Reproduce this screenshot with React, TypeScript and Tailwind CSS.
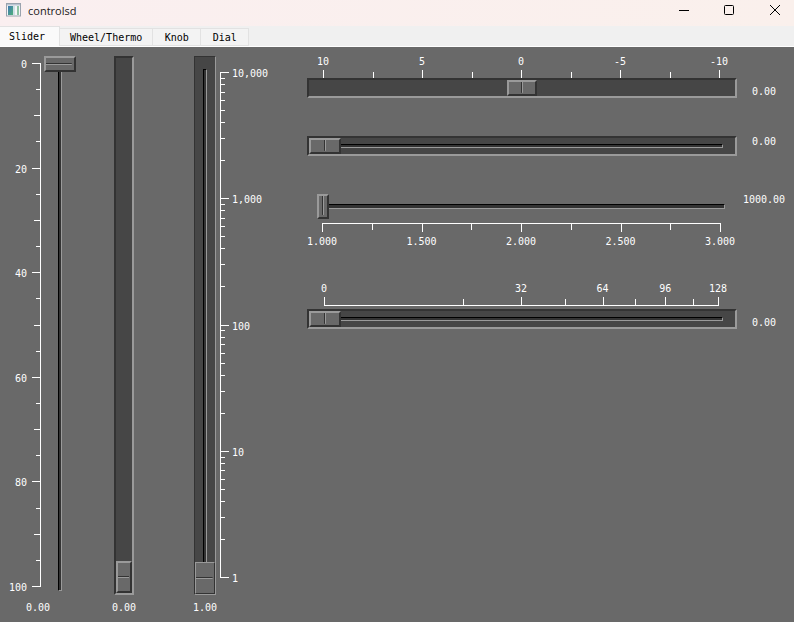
import { useState } from "react";

type Tick = { at: number; size: number; label?: string };

const white = "fill-white";

/* Bevelled thumb shared by every slider; the notch in the middle is a two-tone background. */
const inputBase =
  "m-0 block cursor-pointer appearance-none bg-transparent [grid-area:1/1] " +
  "[&::-webkit-slider-runnable-track]:h-full [&::-webkit-slider-runnable-track]:w-full [&::-webkit-slider-runnable-track]:appearance-none " +
  "[&::-webkit-slider-thumb]:appearance-none [&::-webkit-slider-thumb]:rounded-none [&::-webkit-slider-thumb]:border-solid " +
  "[&::-webkit-slider-thumb]:border-t-[#9a9a9a] [&::-webkit-slider-thumb]:border-l-[#9a9a9a] [&::-webkit-slider-thumb]:border-r-[#333333] [&::-webkit-slider-thumb]:border-b-[#333333] " +
  "[&::-webkit-slider-thumb]:bg-[#696969] [&::-webkit-slider-thumb]:bg-no-repeat";

const vertical =
  "h-full w-full [writing-mode:vertical-lr] " +
  "[&::-webkit-slider-thumb]:w-full [&::-webkit-slider-thumb]:bg-[linear-gradient(#333333_50%,#9a9a9a_50%)] " +
  "[&::-webkit-slider-thumb]:bg-[length:92%_2px] [&::-webkit-slider-thumb]:bg-[position:0_50%]";

const horizontal =
  "h-full w-full " +
  "[&::-webkit-slider-thumb]:h-full [&::-webkit-slider-thumb]:bg-[linear-gradient(90deg,#333333_50%,#9a9a9a_50%)] " +
  "[&::-webkit-slider-thumb]:bg-[length:2px_90%] [&::-webkit-slider-thumb]:bg-[position:50%_0]";

const trough = "border-t-[#333333] border-l-[#333333] border-r-[#9a9a9a] border-b-[#9a9a9a] bg-[#464646]";
const groove = "border-t border-r border-b border-t-black border-r-[#9a9a9a] border-b-[#9a9a9a] bg-[#333333] [grid-area:1/1]";
const grooveVertical = "border-l border-r border-b border-l-black border-r-[#9a9a9a] border-b-[#9a9a9a] bg-[#333333] [grid-area:1/1]";

function Range(props: {
  label: string;
  min: number;
  max: number;
  value: number;
  onChange: (v: number) => void;
  className: string;
}) {
  const { label, min, max, value, onChange, className } = props;
  return (
    <input
      type="range"
      aria-label={label}
      min={min}
      max={max}
      step="any"
      value={value}
      onChange={(e) => onChange(Number(e.target.value))}
      className={`${inputBase} ${className}`}
    />
  );
}

function VScale({ ticks, side, className }: { ticks: Tick[]; side: "left" | "right"; className: string }) {
  const left = side === "left";
  return (
    <svg className={`block overflow-visible ${className}`} shapeRendering="crispEdges" aria-hidden="true">
      <rect x={left ? 40 : 0} y="0" width="1" height="100%" className={white} />
      {ticks.map((t) => (
        <g key={t.at}>
          <rect x={left ? 41 - t.size : 0} y={`${t.at * 100}%`} width={t.size} height="1" className={white} />
          {t.label && (
            <text x={left ? 27 : 12} y={`${t.at * 100}%`} dy="5" textAnchor={left ? "end" : "start"} className={white}>
              {t.label}
            </text>
          )}
        </g>
      ))}
    </svg>
  );
}

function HScale(props: { ticks: Tick[]; side: "top" | "bottom"; base: number; line: boolean; className: string }) {
  const { ticks, side, base, line, className } = props;
  const top = side === "top";
  return (
    <svg className={`block overflow-visible ${className}`} shapeRendering="crispEdges" aria-hidden="true">
      {line && <rect x="0" y={base} width="100%" height="1" className={white} />}
      {ticks.map((t) => (
        <g key={t.at}>
          <rect x={`${t.at * 100}%`} y={top ? base + 1 - t.size : base} width="1" height={t.size} className={white} />
          {t.label && (
            <text x={`${t.at * 100}%`} y={top ? 11 : 22} textAnchor="middle" className={white}>
              {t.label}
            </text>
          )}
        </g>
      ))}
    </svg>
  );
}

const percentTicks: Tick[] = Array.from({ length: 21 }, (_, i) => ({
  at: i / 20,
  size: i % 4 === 0 ? 9 : i % 2 === 0 ? 7 : 5,
  label: i % 4 === 0 ? String(i * 5) : undefined,
}));

const decadeLabels = ["1", "10", "100", "1,000", "10,000"];
const logTicks: Tick[] = decadeLabels.flatMap((label, d) => {
  const major: Tick = { at: 1 - d / 4, size: 9, label };
  if (d === 4) return [major];
  const minors = [2, 3, 4, 5, 6, 7, 8, 9].map((m) => ({ at: 1 - (d + Math.log10(m)) / 4, size: 5 }));
  return [major, ...minors];
});

const evenTicks = (labels: string[], major: number, minor: number): Tick[] =>
  Array.from({ length: 9 }, (_, i) => ({
    at: i / 8,
    size: i % 2 === 0 ? major : minor,
    label: i % 2 === 0 ? labels[i / 2] : undefined,
  }));

const centredTicks = evenTicks(["10", "5", "0", "-5", "-10"], 8, 6);
const thousandTicks = evenTicks(["1.000", "1.500", "2.000", "2.500", "3.000"], 9, 7);
const rootTicks: Tick[] = [0, 16, 32, 48, 64, 80, 96, 112, 128].map((v) => ({
  at: Math.sqrt(v / 128),
  size: v % 32 === 0 ? 9 : 7,
  label: v % 32 === 0 ? String(v) : undefined,
}));

function Value({ children, className = "" }: { children: string; className?: string }) {
  return <output className={`block text-center leading-3 ${className}`}>{children}</output>;
}

function SliderPage() {
  const [v, setV] = useState([0, 0, 0, 0, 0, 1000, 0]);
  const set = (i: number) => (n: number) => setV((old) => old.map((x, k) => (k === i ? n : x)));

  return (
    <main className="flex min-h-0 flex-1 bg-[#696969] font-['DejaVu_Sans_Mono',monospace] text-[10px] text-white">
      <section className="flex shrink-0 pt-[9px] pb-2">
        <div className="flex w-[76px] flex-col gap-[7px]">
          <div className="flex min-h-0 flex-1 gap-[3px]">
            <div className="w-[41px] pt-[7px] pb-[9px]">
              <VScale ticks={percentTicks} side="left" className="h-full w-full" />
            </div>
            <div className="grid w-8">
              <div className={`${grooveVertical} mx-[14px] mb-1`} />
              <Range label="Percent" min={0} max={100} value={v[0]} onChange={set(0)} className={`${vertical} [&::-webkit-slider-thumb]:h-4 [&::-webkit-slider-thumb]:border-2`} />
            </div>
          </div>
          <Value>{v[0].toFixed(2)}</Value>
        </div>

        <div className="ml-9 flex w-6 flex-col gap-[7px]">
          <div className={`mx-[2px] grid min-h-0 flex-1 border-2 ${trough}`}>
            <Range label="Trough" min={0} max={100} value={v[1]} onChange={set(1)} className={`${vertical} [direction:rtl] [&::-webkit-slider-thumb]:h-8 [&::-webkit-slider-thumb]:border-2`} />
          </div>
          <Value>{v[1].toFixed(2)}</Value>
        </div>

        <div className="ml-[57px] flex gap-[3px]">
          <div className="flex w-6 flex-col gap-[7px]">
            <div className={`mx-px grid min-h-0 flex-1 border ${trough}`}>
              <div className={`${grooveVertical} mx-2 my-3 border-t border-t-black`} />
              <Range label="Logarithmic" min={0} max={4} value={v[2]} onChange={set(2)} className={`${vertical} [direction:rtl] [&::-webkit-slider-thumb]:h-8 [&::-webkit-slider-thumb]:border`} />
            </div>
            <Value>{Math.pow(10, v[2]).toFixed(2)}</Value>
          </div>
          <div className="w-[50px] pt-4 pb-[37px]">
            <VScale ticks={logTicks} side="right" className="h-full w-full" />
          </div>
        </div>
      </section>

      <section className="ml-[37px] min-w-0 flex-1 pt-[7px] pr-[3px]">
        <div className="flex items-end">
          <div className="min-w-0 flex-1">
            <div className="pr-[18px] pl-4">
              <HScale ticks={centredTicks} side="top" base={23} line={false} className="h-6 w-full" />
            </div>
            <div className={`grid h-5 border-2 ${trough}`}>
              <Range label="Centred" min={-10} max={10} value={v[3]} onChange={set(3)} className={`${horizontal} [&::-webkit-slider-thumb]:w-[30px] [&::-webkit-slider-thumb]:border-2`} />
            </div>
          </div>
          <Value className="w-[54px]">{v[3].toFixed(2)}</Value>
        </div>

        <div className="mt-[38px] flex items-start">
          <div className={`grid h-5 min-w-0 flex-1 border-2 ${trough}`}>
            <div className={`${groove} mx-3 my-[6px]`} />
            <Range label="Grooved" min={0} max={100} value={v[4]} onChange={set(4)} className={`${horizontal} [&::-webkit-slider-thumb]:w-8 [&::-webkit-slider-thumb]:border-2`} />
          </div>
          <Value className="w-[54px]">{v[4].toFixed(2)}</Value>
        </div>

        <div className="mt-[38px] flex items-start">
          <div className="min-w-0 flex-1">
            <div className="mx-[10px] grid h-[25px]">
              <div className={`${groove} my-[10px] mr-[2px]`} />
              <Range label="Thousands" min={1000} max={3000} value={v[5]} onChange={set(5)} className={`${horizontal} [&::-webkit-slider-thumb]:w-3 [&::-webkit-slider-thumb]:border-2`} />
            </div>
            <div className="mt-1 pr-[17px] pl-[15px]">
              <HScale ticks={thousandTicks} side="bottom" base={0} line className="h-[25px] w-full" />
            </div>
          </div>
          <Value className="w-[54px]">{v[5].toFixed(2)}</Value>
        </div>

        <div className="mt-[33px] flex items-end">
          <div className="min-w-0 flex-1">
            <div className="mb-[3px] pr-[19px] pl-[17px]">
              <HScale ticks={rootTicks} side="top" base={24} line className="h-[25px] w-full" />
            </div>
            <div className={`grid h-5 border-2 ${trough}`}>
              <div className={`${groove} mx-3 my-[6px]`} />
              <Range label="Square root" min={0} max={100} value={v[6]} onChange={set(6)} className={`${horizontal} [&::-webkit-slider-thumb]:w-8 [&::-webkit-slider-thumb]:border-2`} />
            </div>
          </div>
          <Value className="w-[54px]">{v[6].toFixed(2)}</Value>
        </div>
      </section>
    </main>
  );
}

const tabs = ["Slider", "Wheel/Thermo", "Knob", "Dial"];

export default function App() {
  const [tab, setTab] = useState("Slider");
  return (
    <div className="flex h-screen flex-col bg-[#696969]">
      <header className="flex h-[26px] shrink-0 items-center bg-linear-to-r from-[#faeff0] to-[#faf0ec] pl-[6px] font-['Open_Sans',sans-serif] text-[11px] text-[#1a1a1a]">
        <svg viewBox="0 0 16 14" className="mb-[6px] h-[14px] w-4" aria-hidden="true">
          <defs>
            <linearGradient id="pane" x1="0" y1="0" x2="1" y2="1">
              <stop offset="0" stopColor="#3f78b4" />
              <stop offset="1" stopColor="#4fb07a" />
            </linearGradient>
          </defs>
          <rect x="0.5" y="0.5" width="14" height="12.5" fill="#f4f6f8" stroke="#9aa3ae" />
          <rect x="1" y="1" width="13" height="1.5" fill="#b9c4d0" />
          <rect x="2" y="3" width="5" height="9" fill="url(#pane)" />
          <rect x="7" y="3" width="2" height="9" fill="#cfe0e4" />
          <rect x="11" y="3" width="2" height="9" fill="#8fc3a4" />
        </svg>
        <h1 className="mb-1 ml-[6px] flex-1">controlsd</h1>
        <div className="flex h-full text-black">
          <button aria-label="Minimize" className="flex w-[45px] justify-center pt-[5px]">
            <svg width="10" height="11" shapeRendering="crispEdges"><path d="M0 5.5H10" stroke="currentColor" /></svg>
          </button>
          <button aria-label="Maximize" className="flex w-[45px] justify-center pt-[5px]">
            <svg width="10" height="10"><rect x="0.5" y="0.5" width="9" height="9" rx="1" fill="none" stroke="currentColor" /></svg>
          </button>
          <button aria-label="Close" className="flex w-[43px] justify-center pt-[5px] pl-1">
            <svg width="10" height="10"><path d="M0 0L10 10M10 0L0 10" stroke="currentColor" /></svg>
          </button>
        </div>
      </header>

      <nav role="tablist" className="flex h-[21px] shrink-0 items-end border-b border-white bg-[#f0f0f0] font-['DejaVu_Sans_Mono',monospace] text-[10px] text-black">
        {tabs.map((name) => (
          <button
            key={name}
            role="tab"
            aria-selected={tab === name}
            onClick={() => setTab(name)}
            className={
              tab === name
                ? "h-5 w-[60px] border-t border-r border-[#e2e2e2] bg-[#fafafa] pr-[5px]"
                : "h-[18px] min-w-12 border-t border-r border-b border-[#e2e2e2] bg-[#f3f3f3] px-[10px]"
            }
          >
            {name}
          </button>
        ))}
      </nav>

      <SliderPage />
    </div>
  );
}
